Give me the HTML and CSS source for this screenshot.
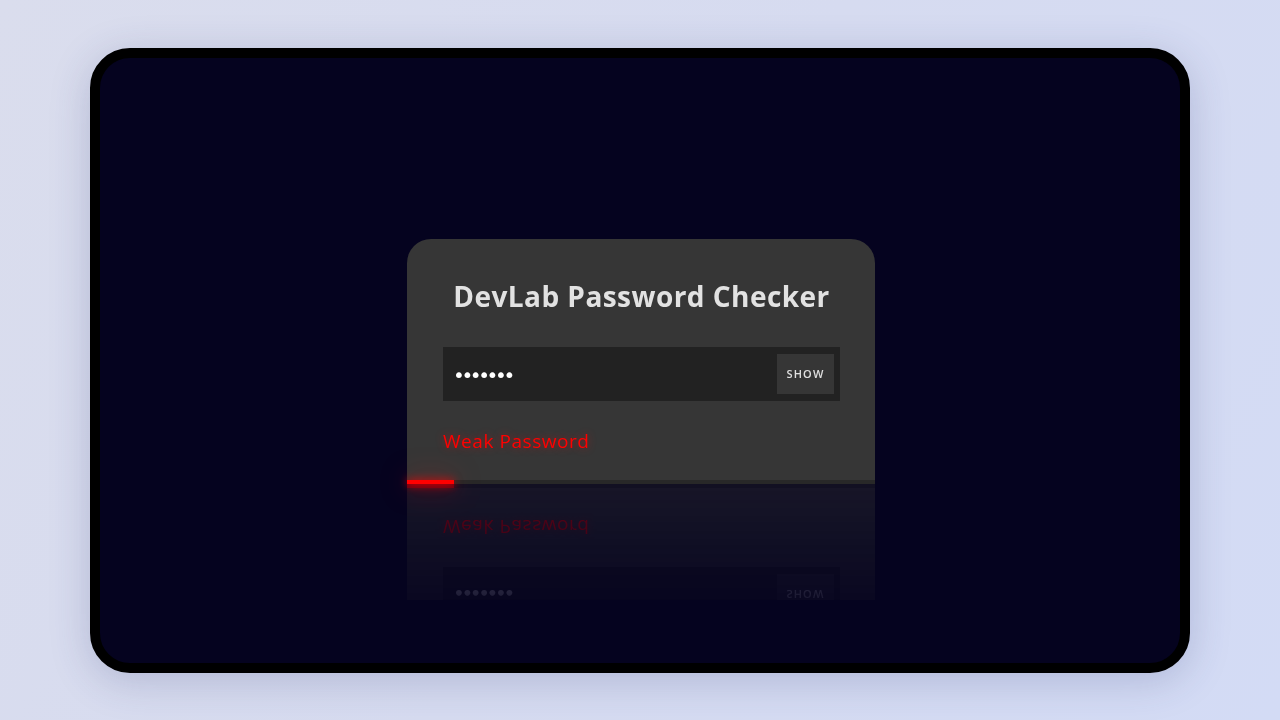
FILE: index.html
```html
<!DOCTYPE html>
<html lang="en">
<head>
<meta charset="utf-8">
<title>DevLab Password Checker</title>
<link rel="stylesheet" href="styles.css">
</head>
<body>
<div class="frame">
  <div class="card">
    <div class="card-body">
      <h1 class="title">DevLab Password Checker</h1>
      <div class="field">
        <span class="dots">•••••••</span>
        <button class="show-btn" type="button">SHOW</button>
      </div>
      <p class="strength">Weak Password</p>
    </div>
    <div class="track"><div class="bar" style="width:10%"></div></div>
  </div>
</div>
</body>
</html>
```

FILE: styles.css
```css
* { box-sizing: border-box; }
html, body { margin: 0; padding: 0; }
body {
  width: 1280px;
  height: 720px;
  overflow: hidden;
  display: flex;
  align-items: center;
  justify-content: center;
  background: linear-gradient(120deg, #dadded 0%, #d6dbf0 50%, #d3dbf5 100%);
  font-family: "Open Sans", "DejaVu Sans", sans-serif;
}
.frame {
  width: 1100px;
  height: 625px;
  border: 10px solid #000;
  border-radius: 40px;
  background: #05031f;
  box-shadow: 0 8px 40px rgba(50, 60, 120, 0.22);
  display: flex;
  align-items: center;
  justify-content: center;
  padding-top: 2px;
  padding-left: 2px;
  overflow: hidden;
}
.card {
  width: 468px;
  background: #363636;
  border-radius: 24px 24px 0 0;
  -webkit-box-reflect: below 0 linear-gradient(to bottom, transparent 52.5%, rgba(0,0,0,0.1) 52.6%, rgba(0,0,0,0.38) 100%);
}
.card-body {
  padding: 39px 35px 26px 36px;
}
.title {
  margin: 0;
  font-size: 28px;
  line-height: 36px;
  font-weight: 700;
  color: #e2e2e2;
  text-align: center;
  letter-spacing: 0.45px;
}
.field {
  margin-top: 33px;
  height: 54px;
  background: #222222;
  display: flex;
  align-items: center;
  justify-content: space-between;
  padding: 0 6px 0 10px;
}
.dots {
  color: #fff;
  font-family: "DejaVu Sans", sans-serif;
  font-size: 20px;
  letter-spacing: -3.4px;
  line-height: 20px;
  padding-top: 2px;
}
.show-btn {
  width: 57px;
  height: 40px;
  border: none;
  background: #363636;
  color: #e0e0e0;
  font-family: "Open Sans", sans-serif;
  font-size: 11px;
  font-weight: 600;
  letter-spacing: 1.1px;
  padding: 0;
}
.strength {
  margin: 27px 0 0;
  font-size: 19px;
  line-height: 26px;
  letter-spacing: 0.55px;
  color: #ff0000;
  text-shadow: 0 0 8px rgba(255, 0, 0, 0.45);
}
.track {
  height: 4px;
  background: #282828;
}
.bar {
  height: 4px;
  background: #ff0000;
  box-shadow: 0 0 8px #ff0000, 0 0 28px rgba(255, 0, 0, 0.6);
}
```
